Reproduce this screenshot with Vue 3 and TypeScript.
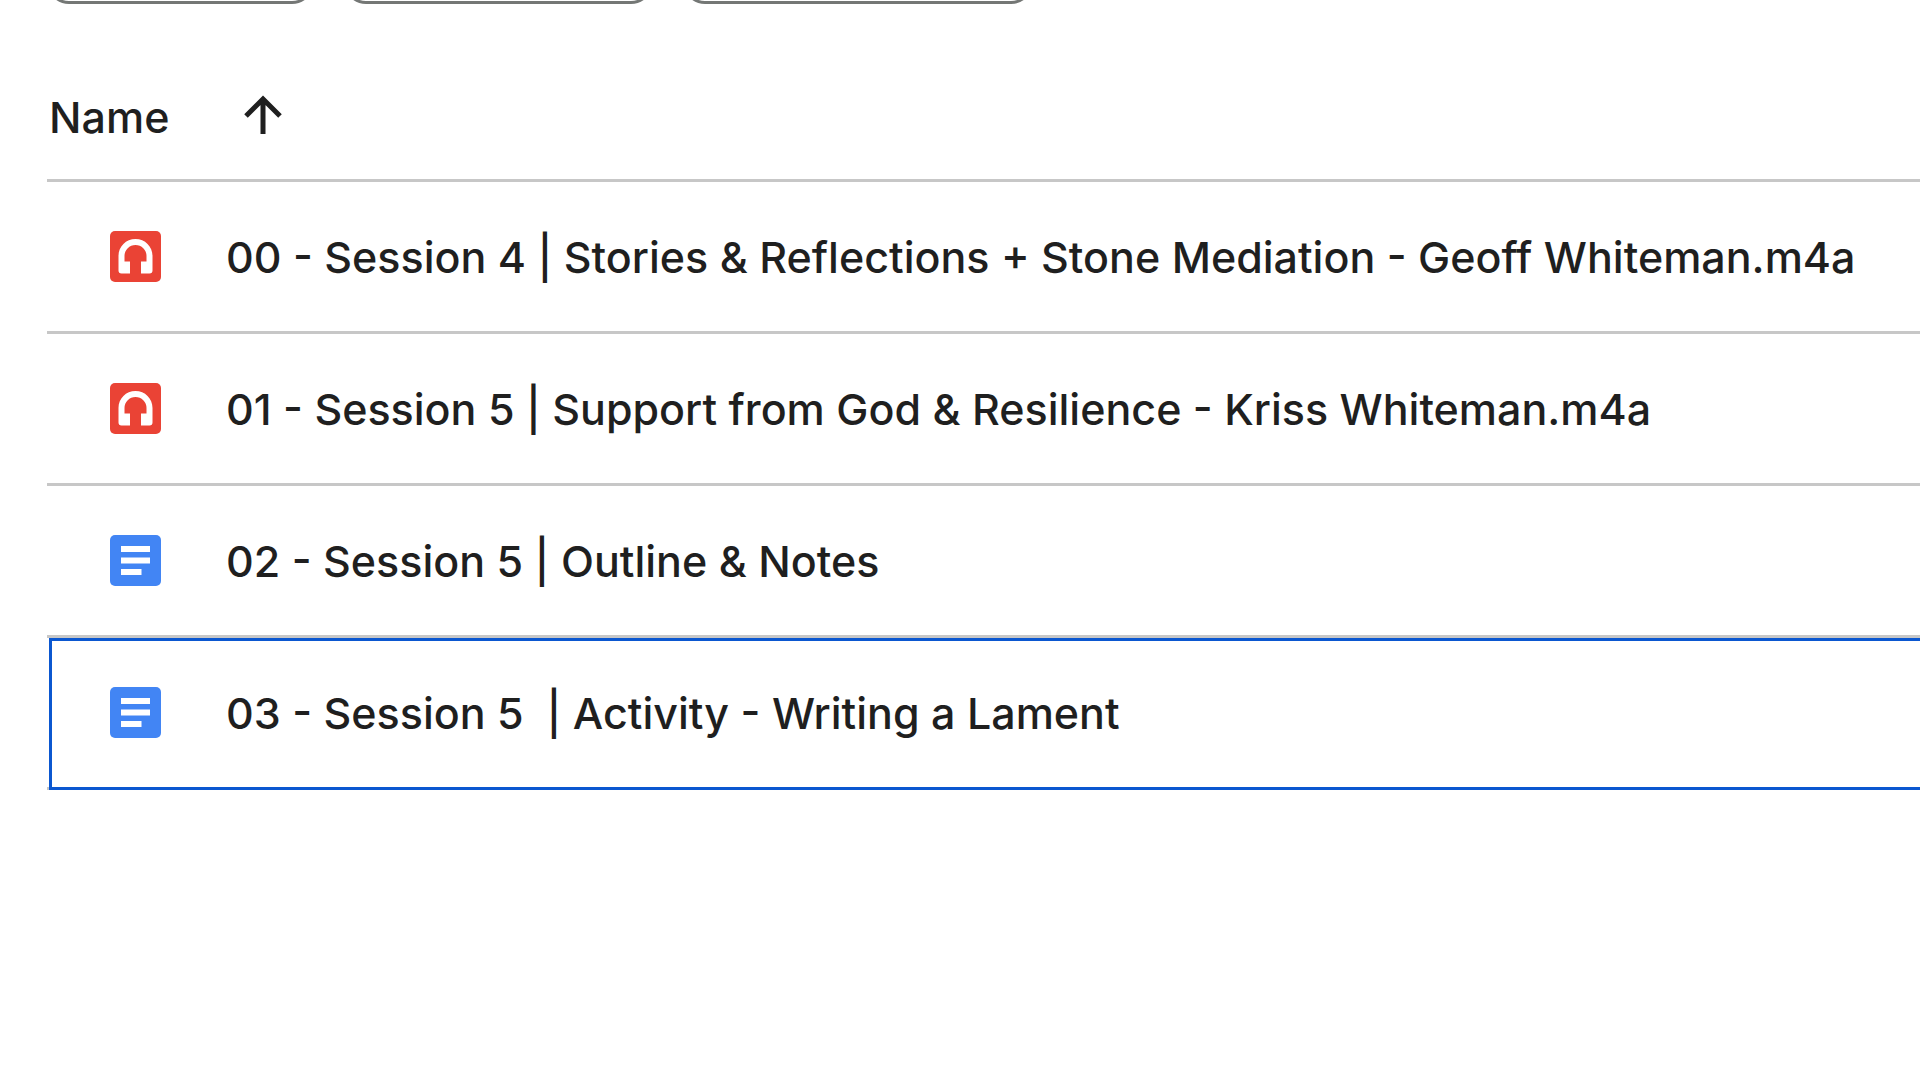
<script setup lang="ts">
import { computed, ref } from 'vue'

type FileKind = 'audio' | 'doc'

interface DriveFile {
  name: string
  kind: FileKind
}

const files: DriveFile[] = [
  { name: '00 - Session 4 | Stories & Reflections + Stone Mediation - Geoff Whiteman.m4a', kind: 'audio' },
  { name: '01 - Session 5 | Support from God & Resilience - Kriss Whiteman.m4a', kind: 'audio' },
  { name: '02 - Session 5 | Outline & Notes', kind: 'doc' },
  { name: '03 - Session 5  | Activity - Writing a Lament', kind: 'doc' },
]

const chips = ['type', 'people', 'modified']
const ascending = ref(true)
const selected = ref(files[3].name)

const sorted = computed(() =>
  [...files].sort((a, b) => (ascending.value ? 1 : -1) * a.name.localeCompare(b.name)),
)
</script>

<template>
  <main class="drive">
    <div class="chips">
      <button v-for="chip in chips" :key="chip" type="button" class="chip" :class="chip"></button>
    </div>

    <table class="files">
      <thead>
        <tr>
          <th colspan="2" scope="col">
            <button type="button" class="sort" @click="ascending = !ascending">
              <span>Name</span>
              <svg class="arrow" :class="{ down: !ascending }" viewBox="0 0 40 40" aria-hidden="true">
                <path d="M20 37V4M3 19 20 2l17 17" />
              </svg>
            </button>
          </th>
        </tr>
      </thead>
      <tbody>
        <tr
          v-for="file in sorted"
          :key="file.name"
          :class="{ selected: file.name === selected }"
          @click="selected = file.name"
        >
          <td class="kind">
            <svg v-if="file.kind === 'audio'" class="icon" viewBox="0 0 51 51" aria-hidden="true">
              <rect width="51" height="51" rx="5" fill="#ea4335" />
              <path
                fill="#fff"
                d="M25.500 8C16 8 8.500 15.500 8.500 25v14.500a3 3 0 0 0 3 3H20V30.500h-5.500V25a11 11 0 0 1 22 0v5.500H31v12h8.500a3 3 0 0 0 3-3V25C42.500 15.500 35 8 25.500 8z"
              />
            </svg>
            <svg v-else class="icon" viewBox="0 0 51 51" aria-hidden="true">
              <rect width="51" height="51" rx="5" fill="#4285f4" />
              <path fill="#fff" d="M11 11h29v6H11zM11 22.500h29v6H11zM11 34h20.500v6H11z" />
            </svg>
          </td>
          <td class="name">{{ file.name }}</td>
        </tr>
      </tbody>
    </table>
  </main>
</template>

<style>
body {
  background: #fff;
}
</style>

<style scoped>
.drive {
  overflow: hidden;
  padding-left: 47px;
  color: #1f1f1f;
  font-family: Inter, 'Liberation Sans', sans-serif;
  font-size: 43px;
  font-weight: 500;
  line-height: 56px;
}

/* Only the lower edge of the filter bar is in view. */
.chips {
  display: flex;
  align-items: flex-end;
  gap: 30px;
  height: 4px;
}

.chip {
  flex: none;
  height: 64px;
  padding: 0;
  border: 3px solid #747775;
  border-radius: 22px;
  background: #fff;
}

.type {
  width: 267px;
}

.people {
  width: 309px;
}

.modified {
  width: 350px;
}

.files {
  width: 100%;
  border-spacing: 0;
}

th {
  height: 178px;
  padding: 85px 0 0 2px;
  border-bottom: 3px solid #c7c7c7;
  font-weight: 500;
  text-align: left;
  vertical-align: top;
  box-sizing: border-box;
}

.sort {
  display: flex;
  align-items: center;
  gap: 74px;
  padding: 0;
  border: 0;
  background: none;
  color: inherit;
  font: inherit;
}

.arrow {
  width: 40px;
  height: 40px;
  overflow: visible;
  fill: none;
  stroke: currentColor;
  stroke-width: 5px;
}

.down {
  transform: rotate(180deg);
}

td {
  height: 152px;
  padding: 0;
  border-bottom: 3px solid #c7c7c7;
  box-sizing: border-box;
}

.kind {
  width: 179px;
  padding-left: 63px;
}

.icon {
  display: block;
  width: 51px;
  height: 51px;
}

.name {
  white-space: pre;
}

.selected {
  position: relative;
}

/* Selection ring over the row; its right side runs off the page. */
.selected::after {
  content: '';
  position: absolute;
  inset: 0 -4px 0 2px;
  border: 3px solid #0b57d0;
  pointer-events: none;
}
</style>
